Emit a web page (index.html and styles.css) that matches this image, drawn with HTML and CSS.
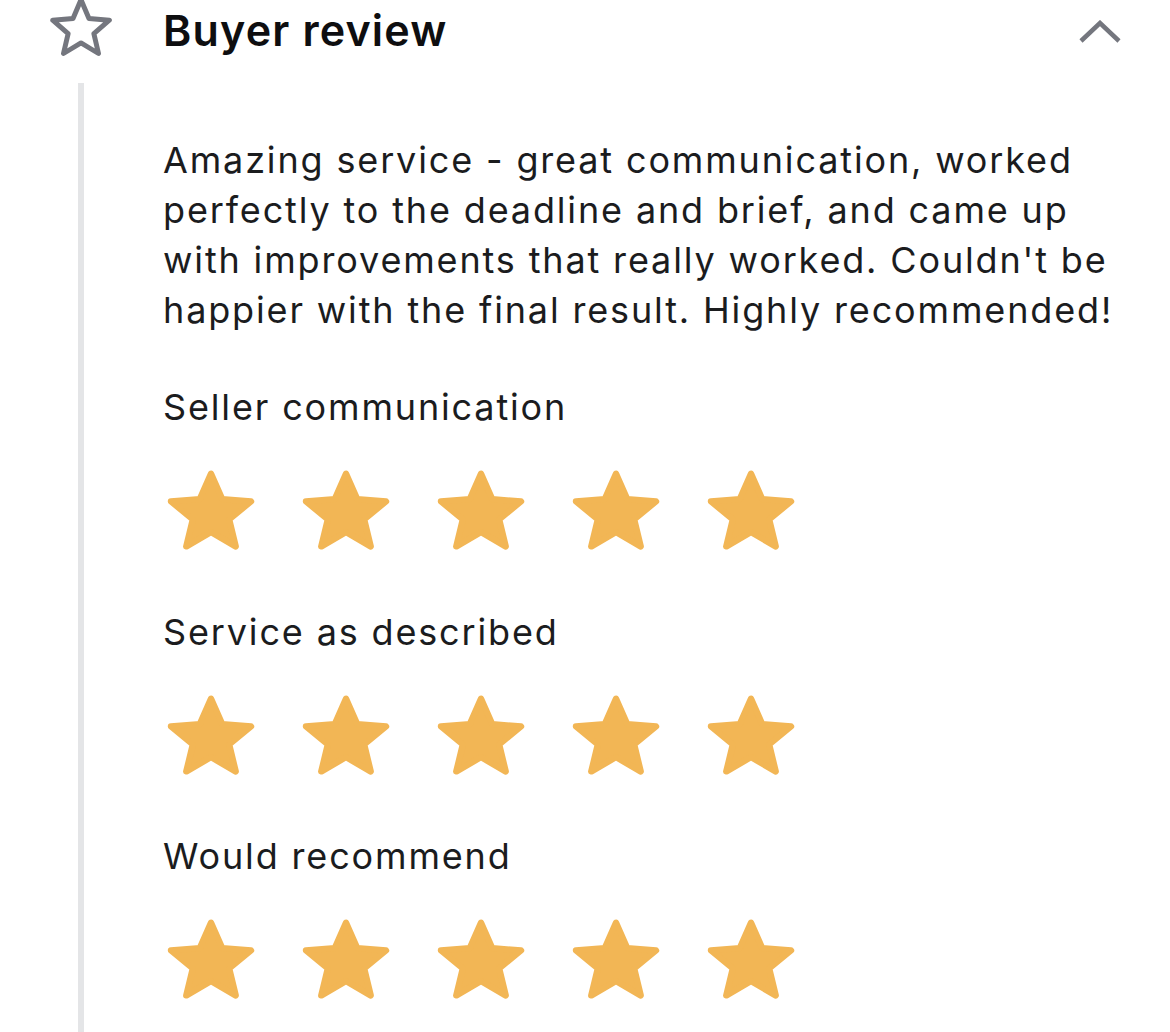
FILE: index.html
```html
<!DOCTYPE html>
<html>
<head>
<meta charset="utf-8">
<link rel="stylesheet" href="styles.css">
</head>
<body>
<svg width="0" height="0" class="defs">
  <defs>
    <path id="star" d="M12 17.27L18.18 21l-1.64-7.03L22 9.24l-7.19-.61L12 2 9.19 8.63 2 9.24l5.46 4.73L5.82 21z"/>
  </defs>
</svg>
<div class="review">
  <div class="header">
    <div class="header-icon">
      <svg class="outline-star" viewBox="0 0 24 24"><use href="#star"/></svg>
    </div>
    <h2 class="title">Buyer review</h2>
    <svg class="chevron" viewBox="0 0 42 24"><polyline points="2,21 21,3 40,21"/></svg>
  </div>
  <div class="body">
    <div class="rail"><div class="line"></div></div>
    <div class="content">
      <p class="text">Amazing service - great communication, worked perfectly to the deadline and brief, and came up with improvements that really worked. Couldn't be happier with the final result. Highly recommended!</p>
      <div class="rating">
        <div class="label">Seller communication</div>
        <div class="stars">
          <svg class="star" viewBox="0 0 24 24" preserveAspectRatio="none"><use href="#star"/></svg>
          <svg class="star" viewBox="0 0 24 24" preserveAspectRatio="none"><use href="#star"/></svg>
          <svg class="star" viewBox="0 0 24 24" preserveAspectRatio="none"><use href="#star"/></svg>
          <svg class="star" viewBox="0 0 24 24" preserveAspectRatio="none"><use href="#star"/></svg>
          <svg class="star" viewBox="0 0 24 24" preserveAspectRatio="none"><use href="#star"/></svg>
        </div>
      </div>
      <div class="rating">
        <div class="label">Service as described</div>
        <div class="stars">
          <svg class="star" viewBox="0 0 24 24" preserveAspectRatio="none"><use href="#star"/></svg>
          <svg class="star" viewBox="0 0 24 24" preserveAspectRatio="none"><use href="#star"/></svg>
          <svg class="star" viewBox="0 0 24 24" preserveAspectRatio="none"><use href="#star"/></svg>
          <svg class="star" viewBox="0 0 24 24" preserveAspectRatio="none"><use href="#star"/></svg>
          <svg class="star" viewBox="0 0 24 24" preserveAspectRatio="none"><use href="#star"/></svg>
        </div>
      </div>
      <div class="rating">
        <div class="label">Would recommend</div>
        <div class="stars">
          <svg class="star" viewBox="0 0 24 24" preserveAspectRatio="none"><use href="#star"/></svg>
          <svg class="star" viewBox="0 0 24 24" preserveAspectRatio="none"><use href="#star"/></svg>
          <svg class="star" viewBox="0 0 24 24" preserveAspectRatio="none"><use href="#star"/></svg>
          <svg class="star" viewBox="0 0 24 24" preserveAspectRatio="none"><use href="#star"/></svg>
          <svg class="star" viewBox="0 0 24 24" preserveAspectRatio="none"><use href="#star"/></svg>
        </div>
      </div>
    </div>
  </div>
</div>
</body>
</html>
```
FILE: styles.css
```css
html, body {
  margin: 0;
  padding: 0;
  background: #ffffff;
  height: 100%;
  overflow: hidden;
}
body {
  font-family: "Inter", "Liberation Sans", sans-serif;
  color: #1b1c1e;
}
.defs {
  position: absolute;
  width: 0;
  height: 0;
}
.review {
  width: 1170px;
}
.header {
  display: flex;
  align-items: center;
  height: 60px;
}
.header-icon {
  width: 163px;
  flex: none;
  display: flex;
}
.outline-star {
  width: 68px;
  height: 68px;
  margin-left: 47px;
  margin-top: -4px;
}
.outline-star use {
  fill: none;
  stroke: #74767e;
  stroke-width: 1.75;
  stroke-linejoin: round;
}
.title {
  margin: 0;
  flex: 1;
  font-size: 43px;
  font-weight: 600;
  color: #0e0e10;
  letter-spacing: 1.15px;
}
.chevron {
  width: 42px;
  height: 24px;
  margin-right: 49px;
  margin-top: 4px;
}
.chevron polyline {
  fill: none;
  stroke: #74767e;
  stroke-width: 4.5;
}
.body {
  display: flex;
  margin-top: 23px;
}
.rail {
  width: 163px;
  flex: none;
  display: flex;
}
.line {
  margin-left: 78px;
  width: 6px;
  background: #e4e5e7;
  min-height: 1000px;
}
.content {
  flex: 1;
  padding-top: 52px;
}
.text {
  margin: 0;
  font-size: 36px;
  line-height: 50px;
  letter-spacing: 1.85px;
  padding-right: 45px;
}
.rating {
  margin-top: 47px;
}
.rating + .rating {
  margin-top: 48.5px;
}
.label {
  font-size: 36px;
  line-height: 50px;
  letter-spacing: 1.85px;
}
.stars {
  display: flex;
  gap: 39px;
  margin-top: 34px;
}
.star {
  width: 96px;
  height: 92px;
  flex: none;
}
.star use {
  fill: #f2b655;
  stroke: #f2b655;
  stroke-width: 1.6;
  stroke-linejoin: round;
}
```
